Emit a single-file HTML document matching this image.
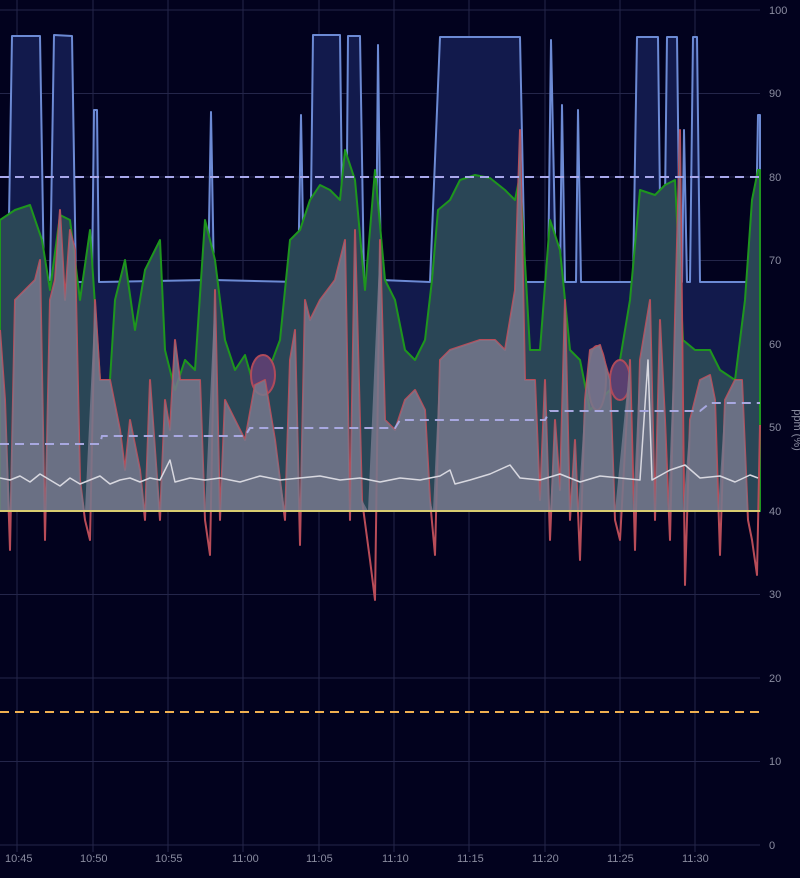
<!DOCTYPE html><html><head><style>html,body{margin:0;padding:0;background:#02021e;}svg{display:block}</style></head><body>
<svg width="800" height="878" xmlns="http://www.w3.org/2000/svg" font-family="Liberation Sans, sans-serif">
<rect width="800" height="878" fill="#02021e"/>
<g stroke="#24264a" stroke-width="1">
<line x1="0" y1="10" x2="760" y2="10"/><line x1="0" y1="93.5" x2="760" y2="93.5"/><line x1="0" y1="177" x2="760" y2="177"/><line x1="0" y1="260.5" x2="760" y2="260.5"/><line x1="0" y1="344" x2="760" y2="344"/><line x1="0" y1="427.5" x2="760" y2="427.5"/><line x1="0" y1="511" x2="760" y2="511"/><line x1="0" y1="594.5" x2="760" y2="594.5"/><line x1="0" y1="678" x2="760" y2="678"/><line x1="0" y1="761.5" x2="760" y2="761.5"/><line x1="0" y1="845" x2="760" y2="845"/>
<line x1="17" y1="0" x2="17" y2="852"/><line x1="93" y1="0" x2="93" y2="852"/><line x1="168" y1="0" x2="168" y2="852"/><line x1="243" y1="0" x2="243" y2="852"/><line x1="319" y1="0" x2="319" y2="852"/><line x1="394" y1="0" x2="394" y2="852"/><line x1="469" y1="0" x2="469" y2="852"/><line x1="545" y1="0" x2="545" y2="852"/><line x1="620" y1="0" x2="620" y2="852"/><line x1="695" y1="0" x2="695" y2="852"/>
</g>
<path d="M0,280 L8,280 L12,36 L40,36 L44,280 L50,280 L54,35 L72,36 L76,282 L92,282 L94,110 L97,110 L99,282 L208,280 L211,112 L214,280 L298,282 L301,115 L304,282 L310,282 L313,35 L340,35 L343,280 L346,280 L348,36 L360,36 L364,280 L376,280 L378,45 L381,280 L430,282 L440,37 L520,37 L525,282 L548,282 L551,40 L556,282 L560,282 L562,105 L565,282 L576,282 L578,110 L581,282 L633,282 L637,37 L658,37 L661,282 L664,282 L667,37 L677,37 L680,282 L682,282 L684,130 L687,282 L690,282 L693,37 L697,37 L700,282 L740,282 L755,282 L758,115 L760,115 L760,511 L0,511 Z" fill="#121a4c" stroke="#6c8ad4" stroke-width="2" stroke-linejoin="round"/>
<path d="M0,220 L15,210 L30,205 L42,240 L50,290 L60,215 L70,220 L80,300 L90,230 L100,380 L110,380 L115,300 L125,260 L135,330 L145,270 L155,250 L160,240 L165,350 L175,390 L185,360 L195,370 L205,220 L215,260 L225,340 L235,370 L245,355 L255,390 L265,380 L280,340 L290,240 L300,230 L310,200 L320,185 L330,190 L340,200 L345,150 L355,180 L365,290 L375,170 L385,280 L395,300 L405,350 L415,360 L425,340 L432,280 L438,210 L450,200 L460,180 L475,175 L490,178 L505,190 L515,200 L520,175 L530,350 L540,350 L550,220 L560,250 L570,350 L580,360 L590,410 L600,400 L610,390 L620,360 L630,300 L640,190 L655,195 L665,185 L675,180 L683,340 L695,350 L710,350 L720,370 L735,380 L745,300 L752,200 L758,170 L760,170 L760,511 L0,511 Z" fill="#2a4656" stroke="#1e961e" stroke-width="2" stroke-linejoin="round"/>
<g fill="#5a4070" stroke="#b04a5a" stroke-width="2"><ellipse cx="263" cy="375" rx="12" ry="20"/><ellipse cx="597" cy="378" rx="9" ry="32"/><ellipse cx="620" cy="380" rx="10" ry="20"/></g>
<path d="M0,330 L5,400 L10,550 L15,300 L25,290 L35,280 L40,260 L45,540 L50,300 L55,280 L60,210 L65,300 L70,230 L75,250 L80,480 L85,520 L90,540 L95,300 L100,380 L110,380 L120,430 L125,470 L130,420 L140,470 L145,520 L150,380 L160,520 L165,400 L170,430 L175,340 L180,380 L190,380 L200,380 L205,520 L210,555 L215,290 L220,520 L225,400 L235,420 L245,440 L255,385 L265,380 L275,440 L285,520 L290,360 L295,330 L300,545 L305,300 L310,320 L320,300 L335,280 L345,240 L350,520 L355,230 L362,500 L370,560 L375,600 L380,240 L385,420 L395,430 L405,400 L415,390 L425,410 L430,500 L435,555 L440,360 L450,350 L465,345 L480,340 L495,340 L505,350 L515,290 L520,130 L525,380 L535,380 L540,500 L545,380 L550,540 L555,420 L560,490 L565,300 L570,520 L575,440 L580,560 L585,400 L590,350 L600,345 L610,380 L615,520 L620,540 L630,360 L635,550 L640,360 L650,300 L655,520 L660,320 L665,420 L670,540 L675,320 L680,130 L685,585 L690,420 L700,380 L710,375 L715,400 L720,555 L725,400 L735,380 L742,380 L748,520 L752,540 L757,575 L760,425" fill="none" stroke="#b84c58" stroke-width="2" stroke-linejoin="round"/>
<path d="M0,330 L5,400 L10,511 L15,300 L25,290 L35,280 L40,260 L45,511 L50,300 L55,280 L60,210 L65,300 L70,230 L75,250 L80,480 L85,511 L95,300 L100,380 L110,380 L120,430 L125,470 L130,420 L140,470 L145,511 L150,380 L160,511 L165,400 L170,430 L175,340 L180,380 L200,380 L205,511 L215,290 L220,511 L225,400 L235,420 L245,440 L255,385 L265,380 L275,440 L285,511 L290,360 L295,330 L300,511 L305,300 L310,320 L320,300 L335,280 L345,240 L350,511 L355,230 L362,500 L368,511 L380,240 L385,420 L395,430 L405,400 L415,390 L425,410 L430,500 L433,511 L440,360 L450,350 L465,345 L480,340 L495,340 L505,350 L515,290 L520,130 L525,380 L535,380 L540,500 L545,380 L550,511 L555,420 L560,490 L565,300 L570,511 L575,440 L578,511 L585,400 L590,350 L600,345 L610,380 L615,511 L630,360 L633,511 L640,360 L650,300 L655,511 L660,320 L665,420 L668,511 L675,320 L680,130 L683,511 L690,420 L700,380 L710,375 L715,400 L718,511 L725,400 L735,380 L742,380 L748,511 L760,511 L0,511 Z" fill="#76788c" fill-opacity="0.85"/>
<path d="M0,478 L10,480 L20,476 L30,482 L40,474 L50,480 L60,486 L70,478 L80,484 L90,480 L100,476 L110,484 L120,480 L130,478 L140,482 L150,478 L160,480 L170,460 L175,482 L190,478 L205,480 L220,478 L240,482 L260,476 L280,480 L300,478 L320,476 L340,480 L360,478 L380,482 L400,478 L420,480 L440,476 L450,470 L455,484 L470,480 L490,474 L510,465 L520,478 L540,480 L560,474 L580,482 L600,476 L620,478 L640,480 L648,360 L652,480 L670,470 L685,465 L700,478 L720,476 L735,482 L750,475 L758,478" fill="none" stroke="#d8d8e0" stroke-width="1.5" stroke-linejoin="round"/>
<path d="M0,444 L100,444 L102,436 L245,436 L250,428 L395,428 L400,420 L545,420 L550,411 L700,411 L710,403 L760,403" fill="none" stroke="#a8a8e0" stroke-width="2" stroke-dasharray="9,6"/>
<line x1="0" y1="177" x2="760" y2="177" stroke="#a8a8ec" stroke-width="2" stroke-dasharray="9,6"/>
<line x1="0" y1="511" x2="760" y2="511" stroke="#d8cc70" stroke-width="2"/>
<line x1="0" y1="712" x2="760" y2="712" stroke="#f0b050" stroke-width="2" stroke-dasharray="9,6"/>
<g fill="#8a8ca0" font-size="11">
<text x="769" y="14">100</text><text x="769" y="97">90</text><text x="769" y="181">80</text><text x="769" y="264">70</text><text x="769" y="348">60</text><text x="769" y="431">50</text><text x="769" y="515">40</text><text x="769" y="598">30</text><text x="769" y="682">20</text><text x="769" y="765">10</text><text x="769" y="849">0</text>
<text x="5" y="862">10:45</text><text x="80" y="862">10:50</text><text x="155" y="862">10:55</text><text x="232" y="862">11:00</text><text x="306" y="862">11:05</text><text x="382" y="862">11:10</text><text x="457" y="862">11:15</text><text x="532" y="862">11:20</text><text x="607" y="862">11:25</text><text x="682" y="862">11:30</text>
<text transform="translate(794,430) rotate(90)" text-anchor="middle">ppm (%)</text>
</g>
</svg></body></html>
